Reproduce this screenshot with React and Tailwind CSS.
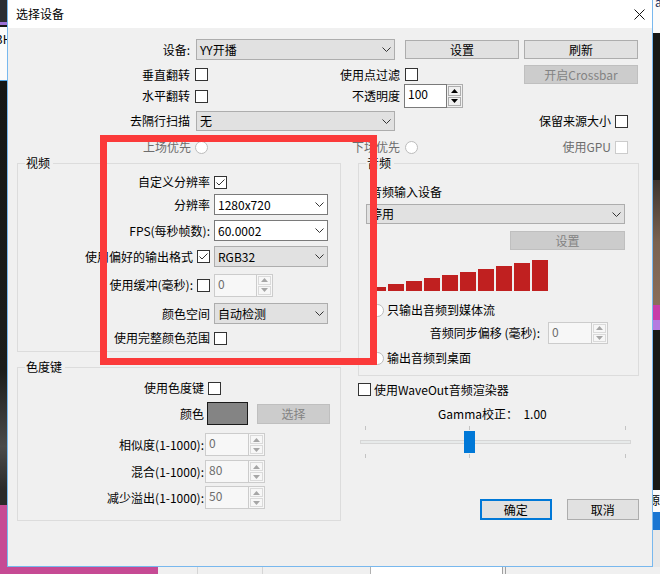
function Check({ checked, disabled, className = '' }) {
  return (
    <div className={`w-[13px] h-[13px] shrink-0 border bg-white flex items-center justify-center ${disabled ? 'border-[#cccccc]' : 'border-[#333333]'} ${className}`}>
      {checked && (
        <svg width="11" height="11" viewBox="0 0 11 11"><path d="M1.5 5.5L4 8L9.5 2.5" stroke="#333" fill="none" /></svg>
      )}
    </div>
  )
}

function Radio({ className = '' }) {
  return <div className={`w-[13px] h-[13px] shrink-0 rounded-full border border-[#bcbcbc] bg-white ${className}`} />
}

function Chevron() {
  return (
    <svg width="9" height="5" viewBox="0 0 9 5" className="shrink-0">
      <path d="M0.5 0.5L4.5 4.5L8.5 0.5" stroke="#333" fill="none" />
    </svg>
  )
}

function Select({ value, white, className = '' }) {
  return (
    <div className={`flex items-center justify-between pl-[3px] pr-[3px] border ${white ? 'bg-white border-[#7a7a7a]' : 'bg-[#e1e1e1] border-[#adadad]'} ${className}`}>
      <span>{value}</span>
      <Chevron />
    </div>
  )
}

function Btn({ children, disabled, primary, className = '' }) {
  const s = primary
    ? 'bg-[#e1e1e1] border-2 border-[#0078d7]'
    : disabled
      ? 'bg-[#cccccc] border border-[#bfbfbf] text-[#838383]'
      : 'bg-[#e1e1e1] border border-[#adadad]'
  return <div className={`flex items-center justify-center ${s} ${className}`}>{children}</div>
}

function Spin({ value, disabled, className = '' }) {
  const arrow = disabled ? '#a6a6a6' : '#000'
  const box = disabled ? 'border-[#dadada]' : 'border-[#adadad]'
  return (
    <div className={`flex ${className}`}>
      <div className={`flex-1 border pl-[3px] pt-[1px] leading-[16px] ${disabled ? 'border-[#cccccc] bg-[#f7f7f7] text-[#6d6d6d]' : 'border-[#7a7a7a] bg-white'}`}>
        {value}
      </div>
      <div className={`w-[16px] border border-l-0 p-[1px] flex flex-col gap-[1px] ${disabled ? 'border-[#cccccc] bg-[#f7f7f7]' : 'border-[#adadad] bg-[#f0f0f0]'}`}>
        <div className={`flex-1 border ${box} flex items-center justify-center`}>
          <svg width="7" height="4" viewBox="0 0 7 4"><path d="M3.5 0L7 4H0Z" fill={arrow} /></svg>
        </div>
        <div className={`flex-1 border ${box} flex items-center justify-center`}>
          <svg width="7" height="4" viewBox="0 0 7 4"><path d="M0 0H7L3.5 4Z" fill={arrow} /></svg>
        </div>
      </div>
    </div>
  )
}

const bars = [4, 7, 10, 13, 16, 19, 22, 25, 28, 31]

export default function App() {
  return (
    <div className="relative w-[660px] h-[574px] overflow-hidden bg-[#161816] text-[12px] leading-[14px] text-black font-[family-name:'Noto_Sans_CJK_SC','Noto_Sans',sans-serif]">
      {/* desktop behind the dialog */}
      <div className="absolute left-0 top-0 w-[8px] h-[22px] bg-[#2b2e33]" />
      <div className="absolute left-0 top-[22px] w-[8px] h-[3px] bg-[#9b71d6]" />
      <div className="absolute left-0 top-[27px] w-[8px] h-[54px] bg-[#fbfbfb] border-b border-[#4aa0e0] overflow-hidden">
        <span className="block ml-[-4px] mt-[5px]">3H</span>
      </div>
      <div className="absolute left-0 top-[81px] w-[8px] h-[425px] bg-[linear-gradient(to_bottom,#151716_0%,#1b1d1b_68%,#4a4a4a_86%,#2a2a2a_96%)]" />
      <div className="absolute left-0 top-[505px] w-[160px] h-[69px] bg-[#c64a94]" />
      <div className="absolute left-[653px] top-0 w-[7px] h-[33px] bg-[#fbfbfb] overflow-hidden">
        <span className="block ml-[2px] mt-[-5px] text-[#203060]">a</span>
      </div>
      <div className="absolute left-[653px] top-[180px] w-[7px] h-[125px] bg-[linear-gradient(to_bottom,#3e342e,#7a6250_50%,#8a6e5a)]" />
      <div className="absolute left-[653px] top-[305px] w-[7px] h-[15px] bg-[#c83ca8]" />
      <div className="absolute left-[653px] top-[320px] w-[7px] h-[10px] bg-[#b57ae0]" />
      <div className="absolute left-[653px] top-[490px] w-[7px] h-[22px] bg-[#fbfbfb] overflow-hidden">
        <span className="block ml-[-5px] mt-[3px]">源</span>
      </div>
      <div className="absolute left-[653px] top-[512px] w-[7px] h-[18px] bg-[#1a76d2]" />
      <div className="absolute left-[653px] top-[530px] w-[7px] h-[44px] bg-[#e8e8e8]" />
      <div className="absolute left-[158px] top-[567px] w-[502px] h-[7px] bg-[#f0f0f0] flex">
        <div className="w-[40px] border-r border-[#d5d5d5]" />
        <div className="w-[65px] border-r border-[#d5d5d5]" />
        <div className="w-[108px] border-r border-[#b0b0b0]" />
        <div className="w-[132px] bg-white border-r border-[#a0a0a0]" />
        <div className="w-[3px] border-r border-[#a0a0a0]" />
      </div>

      {/* dialog window */}
      <div className="absolute left-[7px] top-0 w-[646px] h-[567px] border-x border-b border-[#78b8ee] bg-[#f0f0f0] flex flex-col">
        <div className="h-[28px] shrink-0 bg-white flex items-center justify-between pl-[8px] pr-[7px]">
          <span>选择设备</span>
          <svg width="11" height="11" viewBox="0 0 11 11"><path d="M0.5 0.5L10.5 10.5M10.5 0.5L0.5 10.5" stroke="#111" /></svg>
        </div>

        <div className="flex flex-col pt-[11px]">
          <div className="grid grid-cols-[185px_207px_119px_126px] h-[21px] items-center">
            <div className="text-right pr-[3px]">设备:</div>
            <Select value="YY开播" className="ml-[3px] w-[199px] h-[21px]" />
            <Btn className="ml-[5px] w-[114px] h-[19px]">设置</Btn>
            <Btn className="ml-[5px] w-[114px] h-[19px]">刷新</Btn>
          </div>
          <div className="grid grid-cols-[185px_207px_119px_126px] h-[19px] items-center mt-[5px]">
            <div className="text-right pr-[3px]">垂直翻转</div>
            <div className="flex items-center justify-between">
              <Check className="ml-[2px]" />
              <span>使用点过滤</span>
            </div>
            <Check className="ml-[5px]" />
            <Btn disabled className="ml-[5px] w-[114px] h-[19px]">开启Crossbar</Btn>
          </div>
          <div className="grid grid-cols-[185px_207px_119px_126px] h-[24px] items-center">
            <div className="text-right pr-[3px]">水平翻转</div>
            <div className="flex items-center justify-between">
              <Check className="ml-[2px]" />
              <span>不透明度</span>
            </div>
            <Spin value="100" className="ml-[4px] w-[59px] h-[24px]" />
            <div />
          </div>
          <div className="grid grid-cols-[185px_207px_119px_126px] h-[20px] items-center mt-[3px]">
            <div className="text-right pr-[3px]">去隔行扫描</div>
            <Select value="无" className="ml-[3px] w-[199px] h-[20px]" />
            <div />
            <div className="flex items-center justify-end gap-[4px] pr-[17px]">
              <span>保留来源大小</span>
              <Check />
            </div>
          </div>
          <div className="grid grid-cols-[185px_207px_119px_126px] h-[14px] items-center mt-[9px] text-[#6d6d6d]">
            <div className="text-right pr-[2px]">上场优先</div>
            <div className="flex items-center justify-between">
              <Radio className="ml-[2px]" />
              <span>下场优先</span>
            </div>
            <Radio className="ml-[5px]" />
            <div className="flex items-center justify-end gap-[4px] pr-[17px]">
              <span>使用GPU</span>
              <Check disabled />
            </div>
          </div>
        </div>

        <div className="flex pl-[9px] gap-[17px] mt-[2px]">
          <div className="flex flex-col w-[324px]">
            <fieldset className="border border-[#dcdcdc] h-[196px] min-w-0">
              <legend className="ml-[7px] pl-[1px] pr-[3px] leading-[14px]">视频</legend>
              <div className="flex flex-col pt-[5px]">
                <div className="flex items-center h-[14px]">
                  <div className="w-[192px] text-right">自定义分辨率</div>
                  <Check checked className="ml-[4px]" />
                </div>
                <div className="flex items-center h-[21px] mt-[5px]">
                  <div className="w-[192px] text-right">分辨率</div>
                  <Select white value="1280x720" className="ml-[4px] w-[114px] h-[21px]" />
                </div>
                <div className="flex items-center h-[21px] mt-[5px]">
                  <div className="w-[192px] text-right">FPS(每秒帧数):</div>
                  <Select white value="60.0002" className="ml-[4px] w-[114px] h-[21px]" />
                </div>
                <div className="flex items-center h-[21px] mt-[5px]">
                  <div className="w-[192px] flex items-center justify-end gap-[4px]">
                    <span>使用偏好的输出格式</span>
                    <Check checked />
                  </div>
                  <Select value="RGB32" className="ml-[4px] w-[114px] h-[21px]" />
                </div>
                <div className="flex items-center h-[24px] mt-[6px]">
                  <div className="w-[192px] flex items-center justify-end gap-[4px]">
                    <span>使用缓冲(毫秒):</span>
                    <Check />
                  </div>
                  <Spin disabled value="0" className="ml-[4px] w-[59px] h-[23px]" />
                </div>
                <div className="flex items-center h-[21px] mt-[6px]">
                  <div className="w-[192px] text-right">颜色空间</div>
                  <Select value="自动检测" className="ml-[4px] w-[114px] h-[21px]" />
                </div>
                <div className="flex items-center h-[14px] mt-[7px]">
                  <div className="w-[192px] text-right">使用完整颜色范围</div>
                  <Check className="ml-[4px]" />
                </div>
              </div>
            </fieldset>

            <fieldset className="border border-[#dcdcdc] h-[161px] min-w-0 mt-[8px]">
              <legend className="ml-[7px] pl-[1px] pr-[3px] leading-[14px]">色度键</legend>
              <div className="flex flex-col pt-[7px]">
                <div className="flex items-center h-[14px]">
                  <div className="w-[186px] text-right">使用色度键</div>
                  <Check className="ml-[4px]" />
                </div>
                <div className="flex items-center h-[23px] mt-[7px]">
                  <div className="w-[186px] text-right">颜色</div>
                  <div className="ml-[3px] w-[41px] h-[23px] bg-[#848484] border border-[#1a1a1a]" />
                  <Btn disabled className="ml-[9px] w-[73px] h-[20px]">选择</Btn>
                </div>
                <div className="flex items-center h-[23px] mt-[8px]">
                  <div className="w-[186px] text-right">相似度(1-1000):</div>
                  <Spin disabled value="0" className="ml-[1px] w-[60px] h-[23px]" />
                </div>
                <div className="flex items-center h-[23px] mt-[4px]">
                  <div className="w-[186px] text-right">混合(1-1000):</div>
                  <Spin disabled value="80" className="ml-[1px] w-[60px] h-[23px]" />
                </div>
                <div className="flex items-center h-[23px] mt-[3px]">
                  <div className="w-[186px] text-right">减少溢出(1-1000):</div>
                  <Spin disabled value="50" className="ml-[1px] w-[60px] h-[23px]" />
                </div>
              </div>
            </fieldset>
          </div>

          <div className="flex flex-col w-[281px]">
            <fieldset className="border border-[#dcdcdc] h-[220px] min-w-0">
              <legend className="ml-[7px] pl-[1px] pr-[3px] leading-[14px]">音频</legend>
              <div className="flex flex-col pt-[15px]">
                <div className="h-[14px] pl-[11px]">音频输入设备</div>
                <Select value="停用" className="ml-[7px] mt-[5px] w-[259px] h-[20px]" />
                <Btn disabled className="ml-[151px] mt-[7px] w-[115px] h-[19px]">设置</Btn>
                <div className="flex items-end gap-[2px] h-[31px] ml-[11px] mt-[10px]">
                  {bars.map((h, i) => (
                    <div key={i} className="w-[16px] bg-[#c02020]" style={{ height: h }} />
                  ))}
                </div>
                <div className="flex items-center gap-[3px] h-[14px] ml-[12px] mt-[12px]">
                  <Radio />
                  <span>只输出音频到媒体流</span>
                </div>
                <div className="flex items-center h-[22px] mt-[5px]">
                  <div className="w-[181px] text-right">音频同步偏移 (毫秒):</div>
                  <Spin disabled value="0" className="ml-[8px] w-[60px] h-[22px]" />
                </div>
                <div className="flex items-center gap-[3px] h-[14px] ml-[12px] mt-[7px]">
                  <Radio />
                  <span>输出音频到桌面</span>
                </div>
              </div>
            </fieldset>

            <div className="flex items-center gap-[3px] h-[13px] mt-[7px]">
              <Check />
              <span>使用WaveOut音频渲染器</span>
            </div>
            <div className="h-[14px] mt-[11px] pl-[80px] whitespace-pre">Gamma校正：  1.00</div>
            <div className="relative h-[33px] mt-[5px]">
              <div className="absolute left-[7px] top-0 w-[1px] h-[4px] bg-[#c4c4c4]" />
              <div className="absolute left-[111px] top-0 w-[1px] h-[4px] bg-[#c4c4c4]" />
              <div className="absolute left-[267px] top-0 w-[1px] h-[4px] bg-[#c4c4c4]" />
              <div className="absolute left-[2px] top-[14px] w-[271px] h-[4px] bg-[#e7eaea] border border-[#d6d6d6]" />
              <div className="absolute left-[106px] top-[5px] w-[11px] h-[22px] bg-[#0078d7]" />
              <div className="absolute left-[7px] top-[28px] w-[1px] h-[4px] bg-[#c4c4c4]" />
              <div className="absolute left-[111px] top-[28px] w-[1px] h-[4px] bg-[#c4c4c4]" />
              <div className="absolute left-[267px] top-[28px] w-[1px] h-[4px] bg-[#c4c4c4]" />
            </div>
            <div className="flex mt-[40px] ml-[122px] gap-[15px]">
              <Btn primary className="w-[72px] h-[21px]">确定</Btn>
              <Btn className="w-[73px] h-[21px]">取消</Btn>
            </div>
          </div>
        </div>
      </div>

      {/* red annotation frame */}
      <div className="absolute left-[100px] top-[135px] w-[277px] h-[230px] border-[7px] border-[#fb3a3a] pointer-events-none" />
    </div>
  )
}
